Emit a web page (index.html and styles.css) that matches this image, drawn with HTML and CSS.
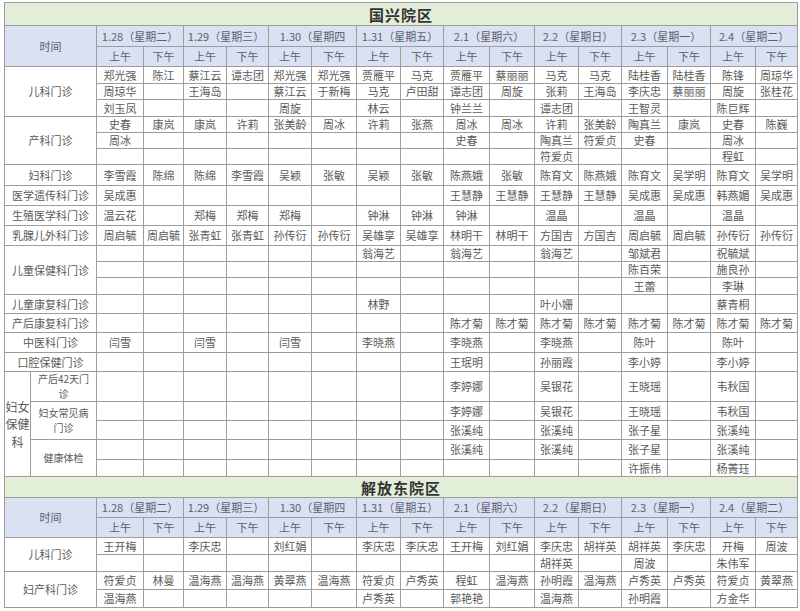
FILE: index.html
```html
<!DOCTYPE html>
<html lang="zh">
<head>
<meta charset="utf-8">
<title>排班表</title>
<link rel="stylesheet" href="styles.css">
</head>
<body>
<div class="page">
<table class="sched">
<colgroup>
<col class="c26"><col class="c66">
<col class="c47"><col class="c40"><col class="c43"><col class="c42"><col class="c43"><col class="c45"><col class="c44"><col class="c43">
<col class="c46"><col class="c45"><col class="c44"><col class="c43"><col class="c46"><col class="c43"><col class="c45"><col class="c42">
</colgroup>
<tbody>
<tr class="title h23"><td colspan="18">国兴院区</td></tr>
<tr class="hd h21"><td colspan="2" rowspan="2">时间</td><td colspan="2">1.28（星期二）</td><td colspan="2">1.29（星期三）</td><td colspan="2">1.30（星期四</td><td colspan="2">1.31（星期五）</td><td colspan="2">2.1（星期六）</td><td colspan="2">2.2（星期日）</td><td colspan="2">2.3（星期一）</td><td colspan="2">2.4（星期二）</td></tr>
<tr class="hd h20"><td>上午</td><td>下午</td><td>上午</td><td>下午</td><td>上午</td><td>下午</td><td>上午</td><td>下午</td><td>上午</td><td>下午</td><td>上午</td><td>下午</td><td>上午</td><td>下午</td><td>上午</td><td>下午</td></tr>

<tr class="h17"><td colspan="2" rowspan="3">儿科门诊</td><td>郑光强</td><td>陈江</td><td>蔡江云</td><td>谭志团</td><td>郑光强</td><td>郑光强</td><td>贾雁平</td><td>马克</td><td>贾雁平</td><td>蔡丽丽</td><td>马克</td><td>马克</td><td>陆桂香</td><td>陆桂香</td><td>陈锋</td><td>周琼华</td></tr>
<tr class="h16"><td>周琼华</td><td></td><td>王海岛</td><td></td><td>蔡江云</td><td>于新梅</td><td>马克</td><td>卢田甜</td><td>谭志团</td><td>周旋</td><td>张莉</td><td>王海岛</td><td>李庆忠</td><td>蔡丽丽</td><td>周旋</td><td>张桂花</td></tr>
<tr class="h17"><td>刘玉凤</td><td></td><td></td><td></td><td>周旋</td><td></td><td>林云</td><td></td><td>钟兰兰</td><td></td><td>谭志团</td><td></td><td>王智灵</td><td></td><td>陈巨辉</td><td></td></tr>

<tr class="h16"><td colspan="2" rowspan="3">产科门诊</td><td>史春</td><td>康岚</td><td>康岚</td><td>许莉</td><td>张美龄</td><td>周冰</td><td>许莉</td><td>张燕</td><td>周冰</td><td>周冰</td><td>许莉</td><td>张美龄</td><td>陶真兰</td><td>康岚</td><td>史春</td><td>陈巍</td></tr>
<tr class="h16"><td>周冰</td><td></td><td></td><td></td><td></td><td></td><td></td><td></td><td>史春</td><td></td><td>陶真兰</td><td>符爱贞</td><td>史春</td><td></td><td>周冰</td><td></td></tr>
<tr class="h16"><td></td><td></td><td></td><td></td><td></td><td></td><td></td><td></td><td></td><td></td><td>符爱贞</td><td></td><td></td><td></td><td>程虹</td><td></td></tr>

<tr class="h21"><td colspan="2">妇科门诊</td><td>李雪霞</td><td>陈绵</td><td>陈绵</td><td>李雪霞</td><td>吴颖</td><td>张敏</td><td>吴颖</td><td>张敏</td><td>陈燕娥</td><td>张敏</td><td>陈育文</td><td>陈燕娥</td><td>陈育文</td><td>吴学明</td><td>陈育文</td><td>吴学明</td></tr>
<tr class="h20"><td colspan="2">医学遗传科门诊</td><td>吴成惠</td><td></td><td></td><td></td><td></td><td></td><td></td><td></td><td>王慧静</td><td>王慧静</td><td>王慧静</td><td>王慧静</td><td>吴成惠</td><td>吴成惠</td><td>韩燕媚</td><td>吴成惠</td></tr>
<tr class="h20"><td colspan="2">生殖医学科门诊</td><td>温云花</td><td></td><td>郑梅</td><td>郑梅</td><td>郑梅</td><td></td><td>钟淋</td><td>钟淋</td><td>钟淋</td><td></td><td>温晶</td><td></td><td>温晶</td><td></td><td>温晶</td><td></td></tr>
<tr class="h20"><td colspan="2">乳腺儿外科门诊</td><td>周启毓</td><td>周启毓</td><td>张青虹</td><td>张青虹</td><td>孙传衍</td><td>孙传衍</td><td>吴雄享</td><td>吴雄享</td><td>林明干</td><td>林明干</td><td>方国吉</td><td>方国吉</td><td>周启毓</td><td>周启毓</td><td>孙传衍</td><td>孙传衍</td></tr>

<tr class="h16"><td colspan="2" rowspan="3">儿童保健科门诊</td><td></td><td></td><td></td><td></td><td></td><td></td><td>翁海艺</td><td></td><td>翁海艺</td><td></td><td>翁海艺</td><td></td><td>邹斌君</td><td></td><td>祝毓斌</td><td></td></tr>
<tr class="h16"><td></td><td></td><td></td><td></td><td></td><td></td><td></td><td></td><td></td><td></td><td></td><td></td><td>陈百荣</td><td></td><td>施良孙</td><td></td></tr>
<tr class="h17"><td></td><td></td><td></td><td></td><td></td><td></td><td></td><td></td><td></td><td></td><td></td><td></td><td>王蕾</td><td></td><td>李琳</td><td></td></tr>

<tr class="h19"><td colspan="2">儿童康复科门诊</td><td></td><td></td><td></td><td></td><td></td><td></td><td>林野</td><td></td><td></td><td></td><td>叶小姗</td><td></td><td></td><td></td><td>蔡青桐</td><td></td></tr>
<tr class="h19"><td colspan="2">产后康复科门诊</td><td></td><td></td><td></td><td></td><td></td><td></td><td></td><td></td><td>陈才菊</td><td>陈才菊</td><td>陈才菊</td><td>陈才菊</td><td>陈才菊</td><td>陈才菊</td><td>陈才菊</td><td>陈才菊</td></tr>
<tr class="h20"><td colspan="2">中医科门诊</td><td>闫雪</td><td></td><td>闫雪</td><td></td><td>闫雪</td><td></td><td>李晓燕</td><td></td><td>李晓燕</td><td></td><td>李晓燕</td><td></td><td>陈叶</td><td></td><td>陈叶</td><td></td></tr>
<tr class="h19"><td colspan="2">口腔保健门诊</td><td></td><td></td><td></td><td></td><td></td><td></td><td></td><td></td><td>王珉明</td><td></td><td>孙丽霞</td><td></td><td>李小婷</td><td></td><td>李小婷</td><td></td></tr>

<tr class="h30"><td rowspan="5" class="vlab">妇女<br>保健<br>科</td><td class="sublab">产后42天门<br>诊</td><td></td><td></td><td></td><td></td><td></td><td></td><td></td><td></td><td>李婷娜</td><td></td><td>吴银花</td><td></td><td>王晓瑶</td><td></td><td>韦秋国</td><td></td></tr>
<tr class="h19"><td rowspan="2" class="sublab">妇女常见病<br>门诊</td><td></td><td></td><td></td><td></td><td></td><td></td><td></td><td></td><td>李婷娜</td><td></td><td>吴银花</td><td></td><td>王晓瑶</td><td></td><td>韦秋国</td><td></td></tr>
<tr class="h19"><td></td><td></td><td></td><td></td><td></td><td></td><td></td><td></td><td>张溪纯</td><td></td><td>张溪纯</td><td></td><td>张子星</td><td></td><td>张溪纯</td><td></td></tr>
<tr class="h20"><td rowspan="2" class="sublab">健康体检</td><td></td><td></td><td></td><td></td><td></td><td></td><td></td><td></td><td>张溪纯</td><td></td><td>张溪纯</td><td></td><td>张子星</td><td></td><td>张溪纯</td><td></td></tr>
<tr class="h17"><td></td><td></td><td></td><td></td><td></td><td></td><td></td><td></td><td></td><td></td><td></td><td></td><td>许振伟</td><td></td><td>杨菁珏</td><td></td></tr>

<tr class="title h21"><td colspan="18">解放东院区</td></tr>
<tr class="hd h20"><td colspan="2" rowspan="2">时间</td><td colspan="2">1.28（星期二）</td><td colspan="2">1.29（星期三）</td><td colspan="2">1.30（星期四</td><td colspan="2">1.31（星期五）</td><td colspan="2">2.1（星期六）</td><td colspan="2">2.2（星期日）</td><td colspan="2">2.3（星期一）</td><td colspan="2">2.4（星期二）</td></tr>
<tr class="hd h20"><td>上午</td><td>下午</td><td>上午</td><td>下午</td><td>上午</td><td>下午</td><td>上午</td><td>下午</td><td>上午</td><td>下午</td><td>上午</td><td>下午</td><td>上午</td><td>下午</td><td>上午</td><td>下午</td></tr>

<tr class="h17"><td colspan="2" rowspan="2">儿科门诊</td><td>王开梅</td><td></td><td>李庆忠</td><td></td><td>刘红娟</td><td></td><td>李庆忠</td><td>李庆忠</td><td>王开梅</td><td>刘红娟</td><td>李庆忠</td><td>胡祥英</td><td>胡祥英</td><td>李庆忠</td><td>开梅</td><td>周波</td></tr>
<tr class="h17"><td></td><td></td><td></td><td></td><td></td><td></td><td></td><td></td><td></td><td></td><td>胡祥英</td><td></td><td>周波</td><td></td><td>朱伟军</td><td></td></tr>

<tr class="h18"><td colspan="2" rowspan="2">妇产科门诊</td><td>符爱贞</td><td>林曼</td><td>温海燕</td><td>温海燕</td><td>黄翠燕</td><td>温海燕</td><td>符爱贞</td><td>卢秀英</td><td>程虹</td><td>温海燕</td><td>孙明霞</td><td>温海燕</td><td>卢秀英</td><td>卢秀英</td><td>符爱贞</td><td>黄翠燕</td></tr>
<tr class="h18"><td>温海燕</td><td></td><td></td><td></td><td></td><td></td><td>卢秀英</td><td></td><td>郭艳艳</td><td></td><td>温海燕</td><td></td><td>孙明霞</td><td></td><td>方金华</td><td></td></tr>
</tbody>
</table>
</div>
</body>
</html>
```

FILE: styles.css
```css
html, body {
  margin: 0;
  padding: 0;
  background: #ffffff;
}
.page {
  padding: 2px 3px 0 4px;
}
.sched {
  border-collapse: collapse;
  table-layout: fixed;
  width: 793px;
  font-family: "Noto Sans CJK SC", "Noto Sans", sans-serif;
  font-size: 11px;
  color: #5a5a5a;
}
.sched td {
  border: 1px solid #9d9d9d;
  padding: 0;
  text-align: center;
  vertical-align: middle;
  line-height: 13px;
  white-space: nowrap;
  overflow: hidden;
}
.c26 { width: 26px; }
.c66 { width: 66px; }
.c40 { width: 40px; }
.c42 { width: 42px; }
.c43 { width: 43px; }
.c44 { width: 44px; }
.c45 { width: 45px; }
.c46 { width: 46px; }
.c47 { width: 47px; }

.h16 { height: 16px; }
.h17 { height: 17px; }
.h18 { height: 18px; }
.h19 { height: 19px; }
.h20 { height: 20px; }
.h21 { height: 21px; }
.h23 { height: 23px; }
.h30 { height: 30px; }

.title td {
  background: #e3eed8;
  font-size: 15px;
  font-weight: bold;
  color: #333333;
  letter-spacing: 1px;
}
.hd td {
  background: #d9e1f2;
  color: #5c6070;
}
.sched td.vlab {
  font-size: 12px;
  line-height: 17.5px;
  white-space: normal;
}
.sched td.sublab {
  font-size: 10px;
  line-height: 14.5px;
  white-space: normal;
}
```
